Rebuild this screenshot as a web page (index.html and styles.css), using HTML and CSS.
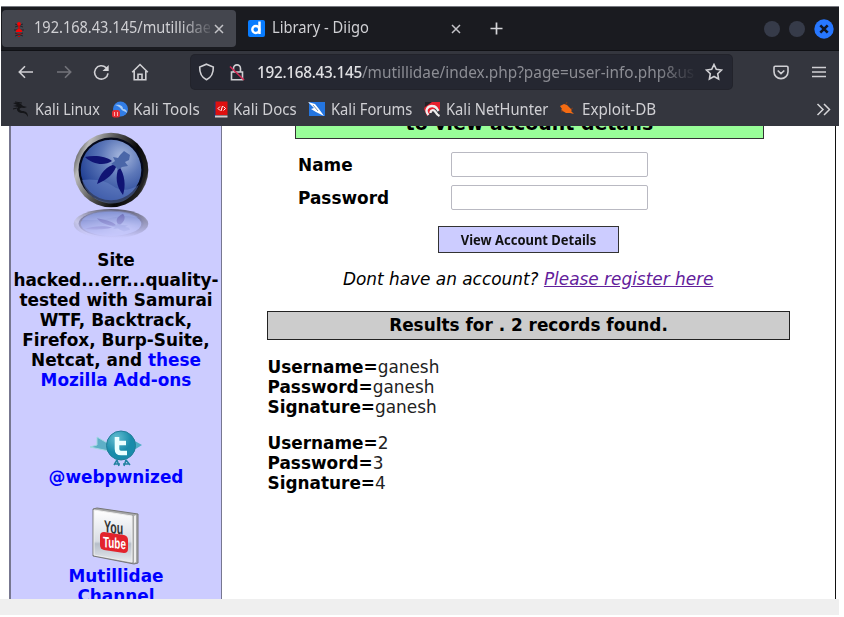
FILE: index.html
```html
<!DOCTYPE html>
<html lang="en">
<head>
<meta charset="utf-8">
<title>Mutillidae - User Info</title>
<link rel="stylesheet" href="styles.css">
</head>
<body>
<div class="window">
  <header class="browser">
    <div class="tabs">
      <div class="tab active">
        <svg class="fav-bug" width="10" height="18" viewBox="0 0 10 18"><path d="M1 4l8 3M9 4L1 7M0 10h10M1 13l8 3M9 13l-8 3" stroke="#24252a" stroke-width="1"/><circle cx="5" cy="4" r="1.900" fill="#f00"/><rect x="4.300" y="5" width="1.400" height="4" fill="#d00"/><path d="M1.800 12q0-3 3.200-3t3.200 3z" fill="#f00"/><path d="M2.500 14h5M4 16.500h2" stroke="#c00" stroke-width="1.200"/></svg>
        <span class="tab-title fade"><span class="narrow">192.168.43.145/mutillidae</span></span>
        <svg class="tab-x" width="10" height="10" viewBox="0 0 10 10"><path d="M1 1l8 8M9 1L1 9"/></svg>
      </div>
      <div class="tab second">
        <svg width="17" height="17" viewBox="0 0 17 17"><rect width="17" height="17" rx="2" fill="#087cff"/><circle cx="7.800" cy="9.500" r="3.500" fill="none" stroke="#fff" stroke-width="2.400"/><path d="M11.500 1.500v12.500" stroke="#fff" stroke-width="2.500"/></svg>
        <span class="tab-title diigo"><span class="narrow">Library - Diigo</span></span>
        <svg class="tab-x" width="10" height="10" viewBox="0 0 10 10"><path d="M1 1l8 8M9 1L1 9"/></svg>
      </div>
      <svg class="plus" width="13" height="13" viewBox="0 0 13 13"><path d="M6.500 .5v12M.5 6.500h12" stroke="#d5d5d8" stroke-width="1.700"/></svg>
      <div class="controls">
        <i></i><i></i>
        <svg width="20" height="20" viewBox="0 0 20 20"><circle cx="10" cy="10" r="9.700" fill="#2777ff"/><path d="M6.300 6.300l7.400 7.400M13.700 6.300l-7.400 7.400" stroke="#101522" stroke-width="2.600"/></svg>
      </div>
    </div>
    <nav class="toolbar">
      <svg class="back" width="16" height="14" viewBox="0 0 16 14"><path d="M15 7H1.500M7 1.300L1.300 7 7 12.700"/></svg>
      <svg class="forward" width="16" height="14" viewBox="0 0 16 14"><path d="M1 7h13.500M9 1.300L14.700 7 9 12.700"/></svg>
      <svg class="reload" width="17" height="17" viewBox="0 0 17 17"><path d="M15 9.300A6.700 6.700 0 1 1 13 3.600l1.200 1.200"/><path class="solid" d="M15.700 1v6.100H9.500z"/></svg>
      <svg class="home" width="18" height="18" viewBox="0 0 18 18"><path d="M1.200 9.200L9 1.500l7.800 7.700M3.200 8v8.800h11.600V8M7 16.500v-5.200h4v5.200"/></svg>
      <div class="urlbar">
        <svg width="17" height="18" viewBox="0 0 17 18"><path d="M8.500 1.200l6.800 2.900c.2 5.200-1.500 10-6.800 12.600C3.200 14.100 1.500 9.300 1.700 4.100z"/></svg>
        <svg class="lock" width="16" height="19" viewBox="0 0 16 19"><path d="M4.500 8.500V5.400a3.500 3.500 0 0 1 7 0v3.100M2.500 9h11v7.700h-11z"/><path class="slash" d="M1 3.500l14 13.500"/></svg>
        <span class="url"><span class="narrow"><b>192.168.43.145</b>/mutillidae/index.php?page=user-info.php&amp;us</span></span>
        <svg class="star" width="18" height="18" viewBox="0 0 18 18"><path d="M9 1.500l2.300 4.800 5.200.7-3.800 3.700.9 5.300L9 13.500 4.400 16l.9-5.300L1.500 7l5.200-.7z"/></svg>
      </div>
      <svg class="pocket" width="16" height="15" viewBox="0 0 16 15"><path d="M2.200 1.200h11.600q1.200 0 1.200 1.200v4.300a7 6.900 0 0 1-14 0V2.400q0-1.200 1.200-1.200zM4.700 5.500L8 8.600l3.300-3.100"/></svg>
      <svg class="menu" width="14" height="12" viewBox="0 0 14 12"><path d="M0 1.500h14M0 6h14M0 10.500h14"/></svg>
    </nav>
    <div class="bookmarks">
      <a class="bm b1"><svg width="18" height="18" viewBox="0 0 18 18"><path d="M1 3c5-1 8 0 10 3l4 1-3 1C7 7 6 10 10 11c4 0 6 2 6 6-2-4-4-4-7-4-4-1-5-4-3-6L1 6l4-1z" fill="#141518"/><path d="M3 2l7 1M5 8L1 9" stroke="#141518"/></svg><span>Kali Linux</span></a>
      <a class="bm b2"><svg width="16" height="17" viewBox="0 0 16 17"><circle cx="8.500" cy="8" r="7.500" fill="#317de6"/><path d="M3 4c5-1 8 1 8 4 3 0 4 2 4 4-2-2-5-2-6-4-1-2-3-3-6-4z" fill="#a9ccf4"/><rect y="9" width="8" height="7.500" rx="2.500" fill="#e52b32"/><path d="M2.500 11v4M5.500 11v4" stroke="#ffb1b1"/></svg><span>Kali Tools</span></a>
      <a class="bm b3"><svg width="14" height="17" viewBox="0 0 14 17"><path d="M0 1h3v15H0z" fill="#273564"/><path d="M1.500 .5h12V14h-12z" fill="#df1010"/><path d="M1 14.500h12.500v2H1z" fill="#d7cacd"/><path d="M6 5.500L4 7.500l2 2M9.500 5.500l2 2-2 2M8.500 5L7 10" stroke="#fff" fill="none"/></svg><span>Kali Docs</span></a>
      <a class="bm b4"><svg width="18" height="16" viewBox="0 0 18 16"><path d="M1 1h16v14H1z" fill="#2475df"/><path d="M0 1l7 2 4 5 5 7-8-4-5-3 3-1z" fill="#fff"/><path d="M5 4l5 6" stroke="#8295aa"/></svg><span>Kali Forums</span></a>
      <a class="bm b5"><svg width="17" height="16" viewBox="0 0 17 16"><path d="M3 1h13v9l-4-3-9 8L0 8z" fill="#e51f2d"/><path d="M4.500 14C0 9 4 4.800 8.500 5c4 0 4.500 3 6 5M6.500 12c0-3 3-4 5-1 1 2 2 3 4 4" fill="none" stroke="#eee" stroke-width="2.300"/><path d="M1 1h7L1 6z" fill="#202126"/></svg><span>Kali NetHunter</span></a>
      <a class="bm b6"><svg width="15" height="14" viewBox="0 0 15 14"><path d="M1 4l4-2 3 1 5 5-1 1 3 3-4-1-4 0-5-3 1-1z" fill="#f46b12"/><path d="M2 10l2-1M7 2l1-2M12 7l2-1" stroke="#793c20"/></svg><span>Exploit-DB</span></a>
      <svg class="more" width="15" height="13" viewBox="0 0 15 13"><path d="M1.500 1l5.500 5.500L1.500 12M8 1l5.500 5.500L8 12"/></svg>
    </div>
  </header>
  <main class="page">
    <aside class="side">
      <svg class="wasp" width="76" height="108" viewBox="0 0 76 108">
        <defs>
          <linearGradient id="rim" x1="0" y1=".3" x2="1" y2=".7"><stop offset="0" stop-color="#555"/><stop offset=".12" stop-color="#bbb"/><stop offset=".4" stop-color="#555"/><stop offset=".7" stop-color="#080808"/><stop offset=".93" stop-color="#222"/><stop offset="1" stop-color="#777"/></linearGradient>
          <radialGradient id="glass" cx=".67" cy=".28" r=".75"><stop offset="0" stop-color="#a9badf"/><stop offset=".45" stop-color="#5d78b9"/><stop offset="1" stop-color="#203f93"/></radialGradient>
          <linearGradient id="fade" x1="0" y1="0" x2="0" y2="1"><stop offset="0" stop-color="#fff" stop-opacity=".6"/><stop offset="1" stop-color="#fff" stop-opacity="0"/></linearGradient>
          <mask id="mirror"><rect y="76" width="76" height="30" fill="url(#fade)"/></mask>
          <g id="badge"><circle cx="38" cy="38" r="37.300" fill="url(#rim)"/><circle cx="38" cy="38" r="32.500" fill="#05091b"/><circle cx="38" cy="38" r="30.300" fill="url(#glass)"/><path d="M9 48q20-2 31 6t26-1A30 30 0 0 1 9 48z" fill="#6e8acc" opacity=".45"/><path d="M12 25c9-2 21-1 27 4-7 5-19 4-27-4zM24 52c3-10 9-19 20-20-2 9-10 16-20 20zM50 63c-7-9-8-18-4-29 6 9 7 20 4 29z" fill="#101474"/><path d="M40 25l5 1 2-3 4-4 6 4-1 5-4 2 3 4-6 1-4 3-3-4-4-2 4-3z" fill="#4a66a8"/></g>
        </defs>
        <use href="#badge"/>
        <g mask="url(#mirror)"><use href="#badge" transform="translate(0 107) scale(1 -.4)"/></g>
      </svg>
      <p class="hacked">Site<br>hacked...err...quality-<br>tested with Samurai<br>WTF, Backtrack,<br>Firefox, Burp-Suite,<br>Netcat, and <a>these<br>Mozilla Add-ons</a></p>
      <svg class="bird" width="54" height="38" viewBox="0 0 54 38"><defs><radialGradient id="blue" cx=".35" cy=".25"><stop offset="0" stop-color="#65bfd2"/><stop offset="1" stop-color="#188baa"/></radialGradient></defs><path d="M1 17l7-2V7l12 7v7z" fill="#5eafc7" stroke="#a3d8e3"/><path d="M44 10l9 5-8 5z" fill="#4eaec6"/><path d="M28 30l-3 5m3-5l2 6m7-6l-2 6m2-6l4 5M25 34h6M34 34h6" stroke="#2382a0" stroke-width="1.500"/><circle cx="32" cy="15.500" r="14.500" fill="url(#blue)" stroke="#237d98"/><path d="M28 7v12q0 4 4 4h6M28 13h9" fill="none" stroke="#eaffff" stroke-width="4.600" stroke-linejoin="round"/></svg>
      <a class="handle">@webpwnized</a>
      <svg class="youtube" width="48" height="60" viewBox="0 0 48 60"><defs><linearGradient id="tile" x2="0" y2="1"><stop stop-color="#fff"/><stop offset=".6" stop-color="#d9dde4"/><stop offset=".65" stop-color="#b6bec9"/><stop offset="1" stop-color="#e8ebef"/></linearGradient></defs><path d="M1 2l4-1 41 6v49l-4 1L1 49z" fill="#a7a8a9" stroke="#777"/><path d="M2 3l38 6v46L2 48z" fill="url(#tile)" stroke="#eee"/><path d="M42 9l2-1v47l-2 1z" fill="#eee"/><path d="M12 25l20 3q4 1 4 5v9q0 4-4 4l-20-3q-4-1-4-5v-9q0-4 4-4z" fill="#e3232c"/><text class="you" transform="translate(12 25) skewY(8) scale(.62 1)">You</text><text class="tube" transform="translate(11 40) skewY(6) scale(.66 1)">Tube</text></svg>
      <a class="channel">Mutillidae<br>Channel</a>
    </aside>
    <section class="content">
      <div class="hint"><span>to view account details</span></div>
      <form class="form">
        <label for="name">Name</label><input id="name">
        <label for="pass">Password</label><input id="pass" type="password">
      </form>
      <button class="view" type="button"><span>View Account Details</span></button>
      <p class="register">Dont have an account? <a>Please register here</a></p>
      <div class="results">Results for . 2 records found.</div>
      <p class="record"><b>Username=</b>ganesh<br><b>Password=</b>ganesh<br><b>Signature=</b>ganesh</p>
      <p class="record"><b>Username=</b>2<br><b>Password=</b>3<br><b>Signature=</b>4</p>
    </section>
  </main>
</div>
<footer class="strip"></footer>
</body>
</html>
```

FILE: styles.css
```css
* { box-sizing: border-box; }
body { margin: 0; padding-top: 6px; width: 844px; height: 617px; overflow: hidden; background: #fff; }
svg { display: block; flex: none; fill: none; }
p { margin: 0; }
.window { width: 838px; height: 593px; margin-left: 1px; overflow: hidden; }
.browser { height: 120px; background: #34363e; border-top: 1px solid #777980; font: 16px/20px "Noto Sans", sans-serif; color: #d0d0d4; }
.tabs { height: 44px; background: #1a1b20; display: flex; align-items: center; border-bottom: 1px solid #101115; }
.tab { display: flex; align-items: center; height: 37px; }
.tab.active { width: 234px; margin-left: 1px; background: #44464e; border-radius: 4px; padding-left: 12px; }
.tab-title { width: 180px; height: 22px; margin: 0 0 1px 10px; white-space: nowrap; }
.narrow { display: inline-block; transform: scaleX(.92); transform-origin: 0 50%; }
.fade .narrow { transform: scaleX(.91); }
.tab.active .tab-title { width: 176px; }
.fade { -webkit-mask-image: linear-gradient(90deg, #000 83%, rgba(0,0,0,.15)); mask-image: linear-gradient(90deg, #000 83%, rgba(0,0,0,.15)); }
.tab-x { stroke: #c4c4c8; stroke-width: 1.5; }
.active .tab-x { margin-left: 4px; }
.second { padding-left: 12px; }
.second .diigo { width: 177px; margin-left: 7px; }
.second .tab-x { margin-left: 2px; }
.plus { margin-left: 29px; }
.controls { display: flex; align-items: center; gap: 9px; margin-left: auto; margin-right: 5px; }
.controls i { width: 16px; height: 16px; border-radius: 50%; background: #363b49; }
.toolbar { height: 42px; display: flex; align-items: center; stroke: #d0d0d4; stroke-width: 1.6; }
.back { margin-left: 17px; }
.forward { margin-left: 22px; opacity: .4; }
.reload { margin-left: 21px; }
.solid { fill: #d5d5d8; stroke: none; }
.home { margin-left: 21px; }
.urlbar { width: 541px; height: 34px; margin-left: 42px; padding-left: 7px; background: #252731; border-radius: 4px; display: flex; align-items: center; box-shadow: 0 0 0 1px #22232b; }
.lock { margin-left: 14px; }
.slash { stroke: #d32b55; }
.url { width: 440px; margin-left: 12px; white-space: nowrap; color: #8c8d94; -webkit-mask-image: linear-gradient(90deg, #000 91%, transparent); mask-image: linear-gradient(90deg, #000 91%, transparent); }
.url .narrow { transform: scaleX(.96); }
.url b { font-weight: 500; color: #e0e0e3; letter-spacing: -.32px; }
.star { margin-left: 8px; }
.pocket { margin-left: 41px; }
.menu { margin-left: 23px; }
.bookmarks { height: 32px; display: flex; align-items: center; padding-left: 11px; }
.bm { display: flex; align-items: center; white-space: nowrap; }
.bm span { margin-left: 5px; transform: scaleX(.935); transform-origin: 0 50%; }
.b1 { width: 100px; } .b2 { width: 102px; } .b3 { width: 94px; } .b4 { width: 116px; } .b5 { width: 135px; }
.b1 span { transform: scaleX(.9); }
.b2 span { transform: scaleX(.95); }
.b4 span { transform: scaleX(.92); }
.b5 span { transform: scaleX(.92); }
.b6 span { margin-left: 8px; transform: scaleX(.95); }
.more { margin-left: auto; margin-right: 8px; stroke: #d5d5d8; stroke-width: 1.500; }
.page { height: 473px; display: flex; overflow: hidden; background: #fff; font: 16.9px/20px "DejaVu Sans", sans-serif; color: #000; padding-left: 8px; }
.side { width: 213px; background: #ccf; border: solid #777790; border-width: 0 1px 0 2px; display: flex; flex-direction: column; align-items: center; font-weight: bold; text-align: center; white-space: nowrap; }
.side a { color: #00f; }
.wasp { margin-top: 6px; margin-right: 10px; }
.hacked { margin-top: 10px; }
.bird { margin-top: 40px; margin-right: 1px; }
.handle { margin-top: -1px; }
.youtube { margin-top: 20px; }
.channel { margin-top: -1px; }
.you, .tube { font: bold 17px "Liberation Sans", sans-serif; fill: #333; }
.tube { font-size: 15px; fill: #fff; }
.content { width: 614px; border-right: 1px solid #111; padding-left: 45px; }
.hint { width: 469px; height: 13px; margin-left: 28px; background: #9f9; border: solid #333; border-width: 0 1px 1px; font-weight: bold; font-size: 18.95px; display: flex; justify-content: center; align-items: flex-end; white-space: nowrap; }
.hint span { margin-bottom: 5px; }
.form { display: grid; grid-template-columns: 153px 197px; row-gap: 8px; margin: 13px 0 0 31px; align-items: center; font-weight: bold; }
.form input { width: 197px; height: 25px; border: 1px solid #b9b9c2; border-radius: 2px; margin: 0; background: #fff; }
.view { display: flex; justify-content: center; align-items: center; width: 181px; height: 27px; margin: 16px 0 0 171px; padding: 0; background: #ccf; border: 1px solid #333; font: bold 13.5px/20px "Noto Sans", sans-serif; color: #111; white-space: nowrap; }
.view span { transform: scaleX(.96); }
.register { margin: 16px 0 0 76px; font-style: italic; white-space: nowrap; }
.register a { color: #63209b; text-decoration: underline; }
.results { width: 523px; height: 29px; margin: 22px 0 17px; background: #ccc; border: 1px solid #222; font-weight: bold; text-align: center; line-height: 27px; }
.record { margin-bottom: 16px; padding-left: .5px; color: #222; }
.record b { color: #000; }
.strip { width: 839px; height: 16px; background: #efefef; }
```
